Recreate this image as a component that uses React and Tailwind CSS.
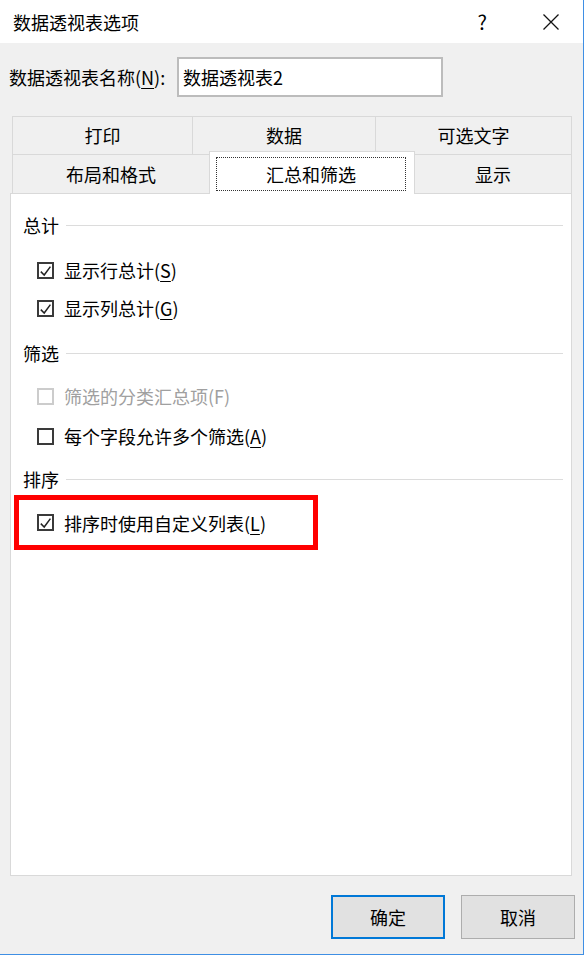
import React from 'react';

const FONT = { fontFamily: '"Noto Sans CJK SC", "Noto Sans", sans-serif' };

function Check({ checked, disabled }) {
  return (
    <span
      className={`w-[17px] h-[17px] shrink-0 border-2 bg-white flex items-center justify-center ${
        disabled ? 'border-[#cccccc]' : 'border-[#3a3a3a]'
      }`}
    >
      {checked && (
        <svg width="13" height="13" viewBox="0 0 13 13">
          <path d="M1.8 7.6 L5.2 11 L11.4 2.6" fill="none" stroke="#222" strokeWidth="1.5" />
        </svg>
      )}
    </span>
  );
}

function Option({ label, hot, checked, disabled, className = '' }) {
  return (
    <div className={`flex items-center h-6 ${className}`}>
      <Check checked={checked} disabled={disabled} />
      <span
        className={`ml-[10px] text-[18px] leading-6 whitespace-nowrap ${
          disabled ? 'text-[#a0a0a0]' : 'text-black'
        }`}
      >
        {label}(
        {disabled ? hot : <span className="underline underline-offset-[3px]">{hot}</span>})
      </span>
    </div>
  );
}

function Group({ title, className = '' }) {
  return (
    <div className={`flex items-center h-6 pl-[12px] pr-[8px] gap-[7px] ${className}`}>
      <span className="text-[18px] leading-6 text-black">{title}</span>
      <div className="flex-1 h-px bg-[#dcdcdc]" />
    </div>
  );
}

export default function App() {
  const tabBase =
    'flex items-center justify-center border-t border-l border-[#d9d9d9] bg-[#f0f0f0] text-[18px] text-black';

  return (
    <div className="w-[588px] h-[958px] bg-white" style={FONT}>
      <div className="w-[584px] h-[955px] border-r border-b border-[#3f8fe4] flex flex-col">
        {/* title bar */}
        <div className="h-[43px] bg-white flex items-center pl-[13px] pr-[24px]">
          <span className="text-[18px] text-black leading-none">数据透视表选项</span>
          <span className="ml-auto text-[20px] text-black leading-none">?</span>
          <svg className="ml-[56px]" width="16" height="16" viewBox="0 0 16 16">
            <path d="M0.5 0.5 L15.5 15.5 M15.5 0.5 L0.5 15.5" stroke="#111" strokeWidth="1.3" />
          </svg>
        </div>

        {/* body */}
        <div className="flex-1 bg-[#f0f0f0] flex flex-col">
          <div className="flex items-center pt-[14px] pl-[9px]">
            <span className="w-[168px] text-[18px] text-black whitespace-nowrap">
              数据透视表名称(<span className="underline underline-offset-[3px]">N</span>):
            </span>
            <div className="w-[266px] h-[40px] bg-white border-2 border-[#bcbcbc] flex items-center pl-[4px] text-[18px] text-black">
              数据透视表2
            </div>
          </div>

          {/* tabs */}
          <div className="mt-[19px] ml-[12px] w-[560px] flex h-[38px]">
            <div className={`${tabBase} w-[180px]`}>打印</div>
            <div className={`${tabBase} w-[183px]`}>数据</div>
            <div className={`${tabBase} flex-1 border-r`}>可选文字</div>
          </div>
          <div className="ml-[12px] w-[560px] flex h-[39px]">
            <div className={`${tabBase} w-[197px]`}>布局和格式</div>
            <div className="relative z-10 w-[206px] h-[43px] -mt-[3px] -mb-[1px] bg-white border-t border-l border-r border-[#d9d9d9] pt-[5px] pl-[6px] pr-[8px] pb-[3px]">
              <div className="h-[34px] border border-dotted border-[#333] flex items-center justify-center text-[18px] text-black">
                汇总和筛选
              </div>
            </div>
            <div className={`${tabBase} flex-1 border-r border-l-0`}>显示</div>
          </div>

          {/* panel */}
          <div className="ml-[10px] w-[562px] h-[683px] bg-white border border-[#d9d9d9] flex flex-col">
            <Group title="总计" className="mt-[19px]" />
            <Option label="显示行总计" hot="S" checked className="mt-[21px] pl-[26px]" />
            <Option label="显示列总计" hot="G" checked className="mt-[14px] pl-[26px]" />
            <Group title="筛选" className="mt-[21px]" />
            <Option label="筛选的分类汇总项" hot="F" disabled className="mt-[19px] pl-[26px]" />
            <Option label="每个字段允许多个筛选" hot="A" className="mt-[16px] pl-[26px]" />
            <Group title="排序" className="mt-[19px]" />
            <div className="mt-[4px] ml-[3px] w-[304px] h-[55px] border-[5px] border-[#ff0000] flex items-center pl-[18px]">
              <Option label="排序时使用自定义列表" hot="L" checked />
            </div>
          </div>

          {/* buttons */}
          <div className="mt-[19px] flex justify-end gap-[16px] pr-[8px]">
            <button className="w-[114px] h-[44px] bg-[#e1e1e1] border-2 border-[#0078d7] text-[18px] text-black">
              确定
            </button>
            <button className="w-[114px] h-[44px] bg-[#e1e1e1] border border-[#adadad] text-[18px] text-black">
              取消
            </button>
          </div>
        </div>
      </div>
    </div>
  );
}
